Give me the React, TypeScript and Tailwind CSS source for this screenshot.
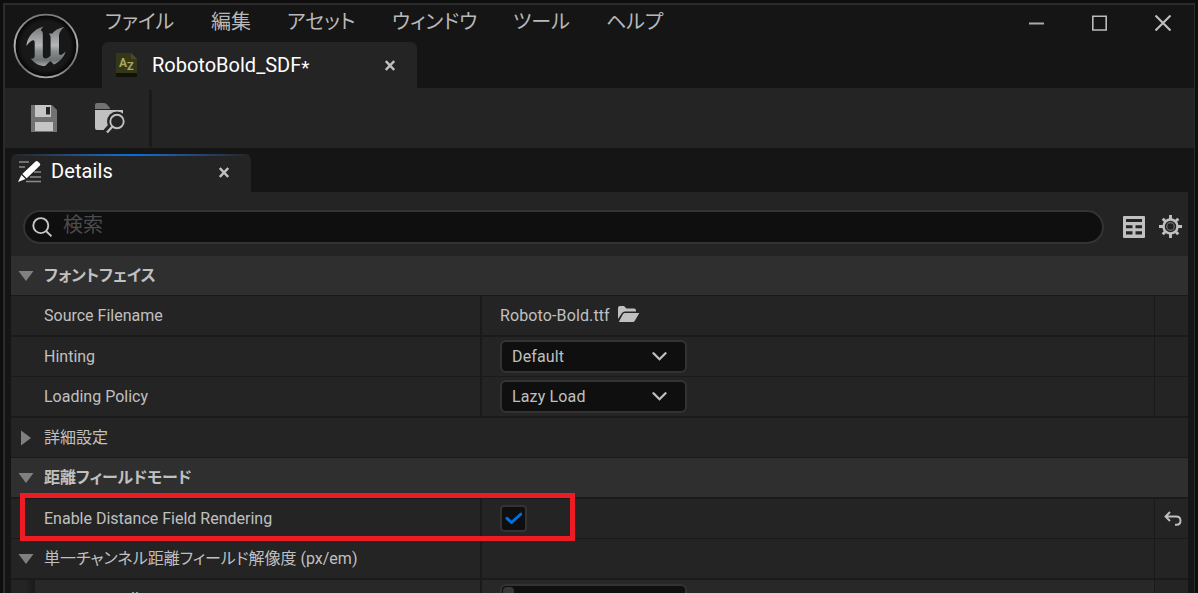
import type { ReactNode } from "react";
import { clsx } from "clsx";

const menus = [
  { label: "ファイル", width: "w-[106px]" },
  { label: "編集", width: "w-[76px]" },
  { label: "アセット", width: "w-[105px]" },
  { label: "ウィンドウ", width: "w-[121px]" },
  { label: "ツール", width: "w-[93px]" },
  { label: "ヘルプ", width: "w-[80px]" },
];

function UnrealLogo() {
  return (
    <svg className="w-[66px] h-[66px]" viewBox="0 0 66 66">
      <defs>
        <linearGradient id="metal" x1="0" y1="0" x2="0" y2="1">
          <stop offset="0" stopColor="#777a7b" />
          <stop offset=".48" stopColor="#b4b6b7" />
          <stop offset=".62" stopColor="#8b8e90" />
          <stop offset=".85" stopColor="#6b7072" />
          <stop offset="1" stopColor="#a4a7a8" />
        </linearGradient>
        <radialGradient id="well">
          <stop offset=".78" stopColor="#181818" />
          <stop offset="1" stopColor="#030303" />
        </radialGradient>
      </defs>
      <circle cx="33" cy="33" r="31.4" fill="url(#well)" stroke="url(#metal)" strokeWidth="1.9" />
      <path
        d="M30.5 13.500C21 16 14 24 13.300 33C16 29.500 18.500 27 20.200 27.200C21.500 27.300 21.700 28.500 21.700 30V42.500C21.700 45.200 20 46 17.800 45.500C21.200 50.500 26.500 53 32 53L37.300 48L41 51.500C46.500 49 51 44.500 52.500 38.500C50 41.200 48.200 42.300 46.800 41.800C46 41.500 46 40.700 46 39.500V22.500C46 19 48.500 16.500 51.500 13.700C45.500 15 41.500 17.700 39 20.700C38 20.500 37 20.300 35.800 20.700C37.300 22 37.600 23 37.600 24.700V42.500C36 44.600 34.300 45.500 32.500 45.500C30.500 45.400 29.800 44.200 29.800 42.300V22C29.800 19.500 29.600 18 27.800 17.200C28.400 16 29.300 15 30.500 13.500Z"
        fill="url(#metal)"
      />
    </svg>
  );
}

function FontIcon() {
  return (
    <svg className="w-[22px] h-6" viewBox="0 0 22 24">
      <path d="M0 0H15L21 6V21H0Z" fill="#34371a" />
      <path d="M15 0V6H21Z" fill="#4a4c28" />
      <path d="M0 20H21V24H0Z" fill="#121308" />
      <text x="3" y="14" fontSize="12" fontWeight="700" fill="#aaa75c" fontFamily="Roboto, sans-serif">A</text>
      <text x="11" y="17" fontSize="11" fontWeight="700" fill="#aaa75c" fontFamily="Roboto, sans-serif">Z</text>
    </svg>
  );
}

function SaveIcon() {
  return (
    <svg className="w-[26px] h-[27px]" viewBox="0 0 26 27">
      <path d="M0 0H21L26 5V27H0Z" fill="#727272" />
      <path d="M4 0H20V12H4ZM4 17H22V26H4Z" fill="#c5c5c5" />
      <path d="M15 2H19V9.500H15Z" fill="#242424" />
    </svg>
  );
}

function BrowseIcon() {
  return (
    <svg className="w-8 h-[31px]" viewBox="0 0 32 31">
      <path d="M0 6V2Q0 0 2 0H9Q11 0 12 1.500L15 5V6Z" fill="#727272" />
      <path d="M0 7H28V14L13 27H2Q0 27 0 25Z" fill="#c0c0c0" />
      <circle cx="22" cy="18.500" r="10" fill="#242424" />
      <path d="M19 20L11 28.500" stroke="#242424" strokeWidth="6" />
      <circle cx="22" cy="18.500" r="6.700" fill="none" stroke="#c0c0c0" strokeWidth="1.900" />
      <path d="M17.500 23.500L12 29.500" stroke="#c0c0c0" strokeWidth="2.300" />
    </svg>
  );
}

function DetailsIcon() {
  return (
    <svg className="w-6 h-6" viewBox="0 0 24 24">
      <path d="M1 3H11M1 8H7M16 13H23M12 18H23M8 22.500H23" stroke="#8a8a8a" strokeWidth="1.500" />
      <path d="M17.500 2.500Q18.700 1.300 19.900 2.500L21.700 4.300Q22.900 5.500 21.700 6.700L8.700 19.200L4.300 15Z" fill="#fff" />
      <path d="M3.400 16L7.500 20L0 23Z" fill="#fff" />
    </svg>
  );
}

function CloseIcon({ className }: { className?: string }) {
  return (
    <svg className={clsx("w-[10px] h-[11px]", className)} viewBox="0 0 10 11">
      <path d="M.8 1L9.200 10M9.200 1L.8 10" stroke="#c0c0c0" strokeWidth="2.400" />
    </svg>
  );
}

function SearchIcon() {
  return (
    <svg className="w-5 h-5" viewBox="0 0 20 20" fill="none" stroke="#c6c6c6" strokeWidth="1.900">
      <circle cx="8.800" cy="8.600" r="7.500" />
      <path d="M14 14L19.500 19.300" />
    </svg>
  );
}

function TableIcon() {
  return (
    <svg className="w-[22px] h-[22px]" viewBox="0 0 22 22">
      <path
        fillRule="evenodd"
        fill="#c0c0c0"
        d="M1 0H21Q22 0 22 1V21Q22 22 21 22H1Q0 22 0 21V1Q0 0 1 0ZM3 3V6H19V3ZM3 9.300V12.300H9.500V9.300ZM12.500 9.300V12.300H19V9.300ZM3 15.300V18.500H9.500V15.300ZM12.500 15.300V18.500H19V15.300Z"
      />
    </svg>
  );
}

function GearIcon() {
  return (
    <svg className="w-[23px] h-[23px]" viewBox="0 0 23 23" fill="none" stroke="#c0c0c0">
      <circle cx="11.500" cy="11.500" r="7" strokeWidth="2.500" />
      <circle cx="11.500" cy="11.500" r="3.800" stroke="#747474" strokeWidth="1.200" />
      <path
        d="M11.500 0V4M11.500 19V23M0 11.500H4M19 11.500H23M3.700 3.700L6.300 6.300M16.700 16.700L19.300 19.300M19.300 3.700L16.700 6.300M6.300 16.700L3.700 19.300"
        strokeWidth="2.900"
      />
    </svg>
  );
}

function FolderIcon() {
  return (
    <svg className="w-[22px] h-4" viewBox="0 0 22 16" fill="#c0c0c0">
      <path d="M0 13V2Q0 0 2 0H6L8.500 2.500H16Q18 2.500 18 4.500V5.500H7Q5 5.500 4 7Z" />
      <path d="M.8 16L5 8Q5.700 7 7 7H21.300L17 14.500Q16.300 16 14.500 16Z" />
    </svg>
  );
}

function ResetIcon() {
  return (
    <svg className="w-[18px] h-[15px]" viewBox="0 0 18 15" fill="none" stroke="#c0c0c0" strokeWidth="1.900">
      <path d="M6 1L1.500 5.500L6 10M1.500 5.500H12Q16.500 5.500 16.500 9.700Q16.500 13.700 12.500 13.700H11" />
    </svg>
  );
}

function Caret({ open }: { open?: boolean }) {
  return open ? (
    <svg className="w-4 h-[10px]" viewBox="0 0 16 10">
      <path d="M.5 0H15.500L8 10Z" fill="#808080" />
    </svg>
  ) : (
    <svg className="w-[10px] h-4 ml-[3px]" viewBox="0 0 10 16">
      <path d="M0 .5V15.500L10 8Z" fill="#808080" />
    </svg>
  );
}

function Category({ label, className }: { label: string; className?: string }) {
  return (
    <div className={clsx("flex h-[39px] shrink-0 items-center bg-[#2f2f2f] pl-[7px] font-bold text-[#c0c0c0]", className)}>
      <Caret open />
      <span className="ml-[10px] tracking-[-0.1px]">{label}</span>
    </div>
  );
}

interface RowProps {
  label: string;
  caret?: boolean;
  action?: ReactNode;
  children?: ReactNode;
}

function Row({ label, caret, action, children }: RowProps) {
  return (
    <div className="flex h-[39px] shrink-0 bg-[#242424]">
      <div className="flex w-[469px] items-center pl-[7px]">
        <span className="w-[26px]">{caret && <Caret open />}</span>
        {label}
      </div>
      <div className="flex flex-1 items-center border-l-2 border-[#1a1a1a] pl-[18px]">{children}</div>
      <div className="flex w-[34px] items-center border-l border-[#1a1a1a] pl-[9px]">{action}</div>
    </div>
  );
}

function Select({ value }: { value: string }) {
  return (
    <div className="flex h-[33px] w-[187px] items-center justify-between rounded-[6px] border-2 border-[#333] bg-[#0f0f0f] pl-[10px] pr-[18px] tracking-[0.15px]">
      {value}
      <svg className="h-[9px] w-[15px]" viewBox="0 0 15 9" fill="none" stroke="#c0c0c0" strokeWidth="2.300">
        <path d="M1.500 1.300L7.500 7.200L13.500 1.300" strokeLinecap="round" />
      </svg>
    </div>
  );
}

export default function App() {
  return (
    <div className="relative h-[593px] w-[1198px] overflow-hidden bg-[#0e0e0e] pl-[3px] pt-[3px] font-[Roboto,'Noto_Sans_CJK_JP',sans-serif] text-base text-[#c0c0c0] [font-feature-settings:'palt']">
      <div className="flex h-[590px] w-[1192px] flex-col border-l-2 border-r border-t-2 border-[#2b2b2b] bg-[#151515]">
        <header className="flex h-[83px] shrink-0">
          <div className="w-[97px] pl-2 pt-2">
            <UnrealLogo />
          </div>
          <div className="flex-1">
            <div className="flex h-[37px] pl-[3px] text-[20px] leading-[35px] text-[#b8b8b8]">
              {menus.map((m) => (
                <span key={m.label} className={clsx("shrink-0 whitespace-nowrap", m.width)}>
                  {m.label}
                </span>
              ))}
              <div className="ml-auto flex items-center pb-[2px] pr-[23px]">
                <svg className="mr-12 h-4 w-[15px]" viewBox="0 0 15 16">
                  <path d="M0 8.500H15" stroke="#aaa" strokeWidth="2" />
                </svg>
                <svg className="mr-12 h-4 w-[15px]" viewBox="0 0 15 16">
                  <path d="M.8 1.300H14.200V15H.8Z" fill="none" stroke="#bbb" strokeWidth="1.600" />
                </svg>
                <svg className="h-4 w-4" viewBox="0 0 16 16">
                  <path d="M.5 .5L15.500 15.500M15.500 .5L.5 15.500" stroke="#c0c0c0" strokeWidth="2.100" />
                </svg>
              </div>
            </div>
            <div className="flex h-[46px] w-[315px] items-center rounded-t-[6px] bg-[#242424] pl-[14px] text-[20px] text-white">
              <FontIcon />
              <span className="ml-[14px] w-[233px] whitespace-nowrap">
                RobotoBold_SDF<span className="inline-block translate-y-[2px] text-[19px] leading-none">*</span>
              </span>
              <CloseIcon />
            </div>
          </div>
        </header>
        <div className="flex h-[60px] shrink-0 items-center bg-[#242424] pl-[26px]">
          <SaveIcon />
          <div className="ml-[38px]">
            <BrowseIcon />
          </div>
          <div className="ml-[22px] h-[57px] w-[3px] bg-[#1a1a1a]" />
        </div>
        <main className="ml-[6px] mt-[6px] flex min-h-0 w-[1177px] flex-1 flex-col bg-[#1a1a1a]">
          <div className="flex h-[38px] shrink-0 bg-[#151515]">
            <div className="flex w-60 flex-col overflow-hidden rounded-t-[6px] bg-[#242424]">
              <div className="h-[2px] shrink-0 bg-linear-to-r from-[#242424] via-[#0070e0] to-[#242424]" />
              <div className="flex h-[30px] items-center pl-[7px] text-[20px] text-white">
                <DetailsIcon />
                <span className="mb-px ml-[9px] w-[168px] tracking-[0.1px]">Details</span>
                <CloseIcon className="mt-[2px]" />
              </div>
            </div>
          </div>
          <div className="flex h-16 shrink-0 items-center bg-[#242424] pl-3 pr-[6px] pt-[6px]">
            <div className="flex h-[34px] w-[1081px] items-center rounded-full border-2 border-[#333] bg-[#0f0f0f] pl-[7px]">
              <div className="mb-px">
                <SearchIcon />
              </div>
              <span className="mb-[5px] ml-[11px] text-[20px] text-[#4c4c4c]">検索</span>
            </div>
            <div className="ml-[19px]">
              <TableIcon />
            </div>
            <div className="mb-px ml-[13.500px]">
              <GearIcon />
            </div>
          </div>
          <Category label="フォントフェイス" />
          <div className="mt-px">
            <Row label="Source Filename">
              <span className="mr-2 tracking-[0.12px]">Roboto-Bold.ttf</span>
              <div className="mb-[3px]">
                <FolderIcon />
              </div>
            </Row>
          </div>
          <div className="mt-[2px] flex flex-col gap-px">
            <Row label="Hinting">
              <Select value="Default" />
            </Row>
            <Row label="Loading Policy">
              <Select value="Lazy Load" />
            </Row>
          </div>
          <div className="mt-[2px] flex h-[39px] shrink-0 items-center bg-[#242424] pl-[7px]">
            <span className="w-[26px]">
              <Caret />
            </span>
            詳細設定
          </div>
          <Category label="距離フィールドモード" className="mt-px" />
          <div className="mt-[2px] flex flex-col gap-px">
            <Row label="Enable Distance Field Rendering" action={<ResetIcon />}>
              <div className="mb-px flex h-[27px] w-[27px] items-center justify-center rounded-[4px] border-2 border-[#333] bg-[#0f0f0f]">
                <svg className="h-3 w-[17px] shrink-0" viewBox="0 0 17 12" fill="none">
                  <path d="M2 6.300L6.500 10.500L16 2" stroke="#0070e0" strokeWidth="3" strokeLinecap="round" />
                </svg>
              </div>
            </Row>
            <Row label="単一チャンネル距離フィールド解像度 (px/em)" caret />
          </div>
          <div className="mt-[2px] flex h-[13px] shrink-0 overflow-hidden bg-[#282828]">
            <div className="w-6 shrink-0 bg-linear-to-r from-[#242424] from-60% to-[#1a1a1a]" />
            <div className="w-[445px] pl-24 leading-[37px]">ll</div>
            <div className="flex-1 border-l-2 border-[#1a1a1a] pl-[18px] pt-1">
              <div className="h-8 w-[187px] rounded-[6px] border-2 border-[#333] bg-[#0f0f0f]">
                <div className="ml-px mt-px h-7 w-[11px] rounded-[4px] bg-[#383838]" />
              </div>
            </div>
            <div className="w-[34px] border-l border-[#1a1a1a] bg-[#242424]" />
          </div>
        </main>
      </div>
      <div className="absolute left-5 top-[493px] h-12 w-[555px] border-[5px] border-[#ed1c24]" />
    </div>
  );
}
